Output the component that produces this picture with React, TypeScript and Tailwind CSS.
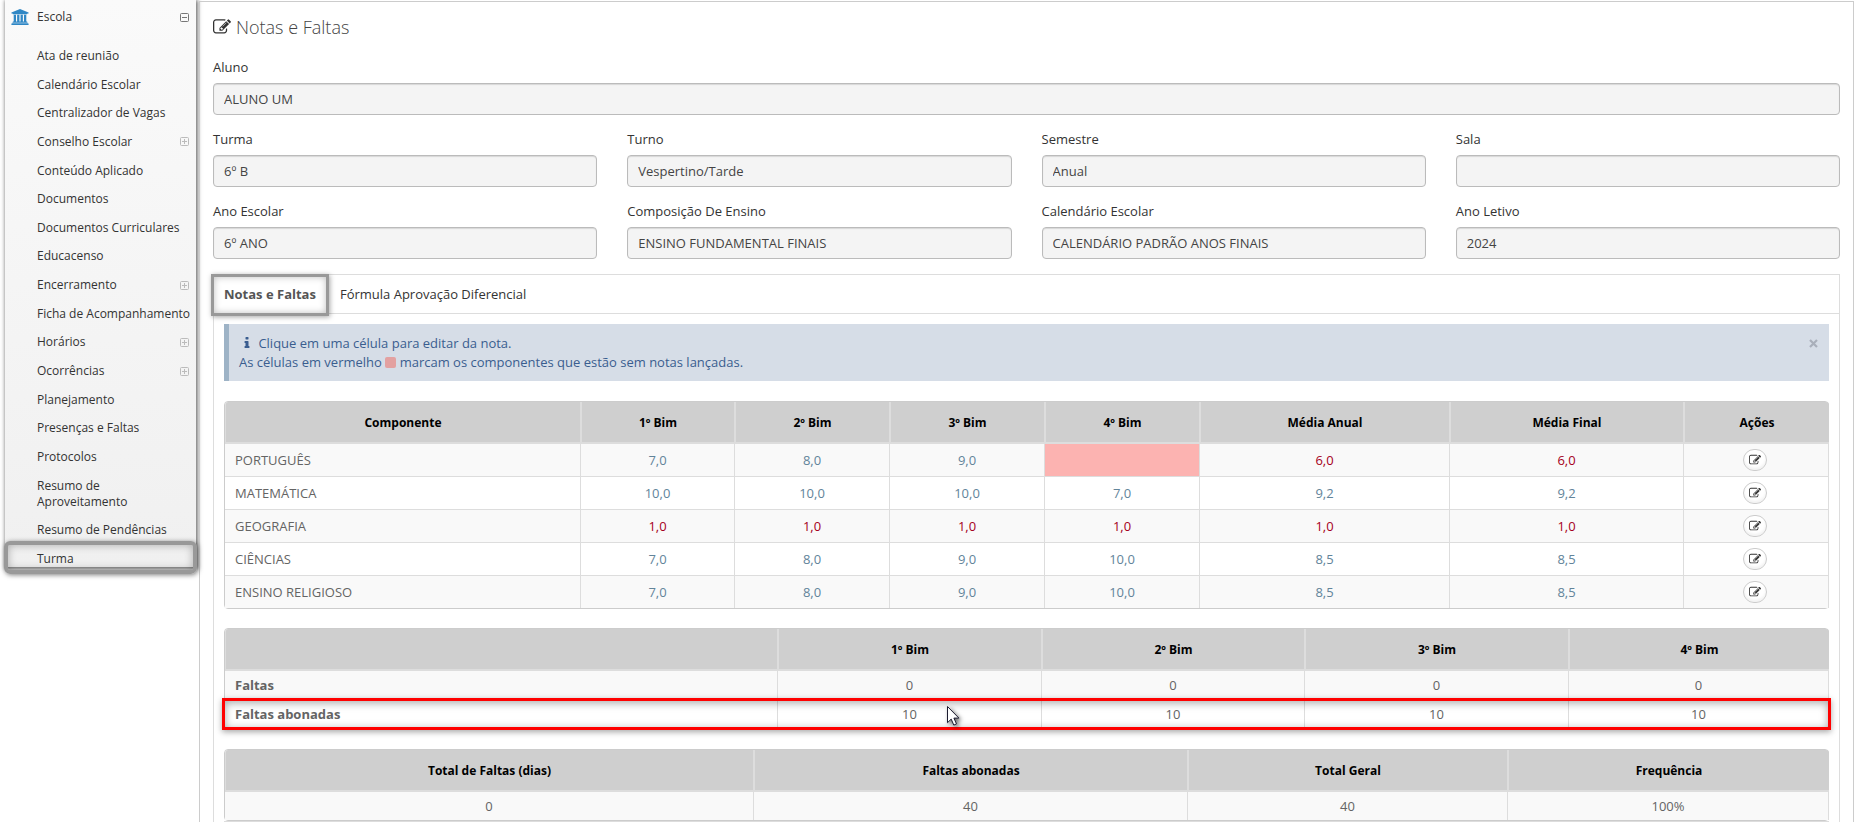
import React from 'react';

type MenuItem = { label: string; expandable?: boolean; active?: boolean };

const menuItems: MenuItem[] = [
  { label: 'Ata de reunião' },
  { label: 'Calendário Escolar' },
  { label: 'Centralizador de Vagas' },
  { label: 'Conselho Escolar', expandable: true },
  { label: 'Conteúdo Aplicado' },
  { label: 'Documentos' },
  { label: 'Documentos Curriculares' },
  { label: 'Educacenso' },
  { label: 'Encerramento', expandable: true },
  { label: 'Ficha de Acompanhamento' },
  { label: 'Horários', expandable: true },
  { label: 'Ocorrências', expandable: true },
  { label: 'Planejamento' },
  { label: 'Presenças e Faltas' },
  { label: 'Protocolos' },
  { label: 'Resumo de Aproveitamento' },
  { label: 'Resumo de Pendências' },
  { label: 'Turma', active: true },
];

const fields = [
  { id: 'turma', label: 'Turma', value: '6º B' },
  { id: 'turno', label: 'Turno', value: 'Vespertino/Tarde' },
  { id: 'semestre', label: 'Semestre', value: 'Anual' },
  { id: 'sala', label: 'Sala', value: '' },
  { id: 'ano-escolar', label: 'Ano Escolar', value: '6º ANO' },
  { id: 'composicao', label: 'Composição De Ensino', value: 'ENSINO FUNDAMENTAL FINAIS' },
  { id: 'calendario', label: 'Calendário Escolar', value: 'CALENDÁRIO PADRÃO ANOS FINAIS' },
  { id: 'ano-letivo', label: 'Ano Letivo', value: '2024' },
];

const grades = [
  { name: 'PORTUGUÊS', values: ['7,0', '8,0', '9,0', '', '6,0', '6,0'] },
  { name: 'MATEMÁTICA', values: ['10,0', '10,0', '10,0', '7,0', '9,2', '9,2'] },
  { name: 'GEOGRAFIA', values: ['1,0', '1,0', '1,0', '1,0', '1,0', '1,0'] },
  { name: 'CIÊNCIAS', values: ['7,0', '8,0', '9,0', '10,0', '8,5', '8,5'] },
  { name: 'ENSINO RELIGIOSO', values: ['7,0', '8,0', '9,0', '10,0', '8,5', '8,5'] },
];

const PASSING_GRADE = 7;

function gradeClass(value: string) {
  if (!value) return 'bg-[#fcb3b1]';
  return parseFloat(value.replace(',', '.')) < PASSING_GRADE ? 'text-[#a50021]' : 'text-[#62849a]';
}

function EditIcon({ className }: { className: string }) {
  return (
    <svg viewBox="0 0 1792 1792" fill="currentColor" className={className} aria-hidden="true">
      <path d="M888 1184l116-116-152-152-116 116v56h96v96h56zm440-720q-16-16-33 1l-350 350q-17 17-1 33t33-1l350-350q17-17 1-33zm80 594v190q0 119-84.5 203.5t-203.5 84.5h-832q-119 0-203.5-84.5t-84.5-203.5v-832q0-119 84.5-203.5t203.5-84.5h832q63 0 117 25 15 7 18 23 3 17-9 29l-49 49q-14 14-32 8-23-6-45-6h-832q-66 0-113 47t-47 113v832q0 66 47 113t113 47h832q66 0 113-47t47-113v-126q0-13 9-22l64-64q15-15 35-7t20 29zm-96-738l288 288-672 672h-288v-288zm444 132l-92 92-288-288 92-92q28-28 68-28t68 28l152 152q28 28 28 68t-28 68z" />
    </svg>
  );
}

function UniversityIcon() {
  return (
    <svg viewBox="0 0 1920 1792" fill="currentColor" className="h-4 w-[18px] text-[#2f87c5]" aria-hidden="true">
      <path d="M960 0l960 384v128h-128q0 26-20.5 45t-48.5 19h-1526q-28 0-48.5-19t-20.5-45h-128v-128zm-704 640h256v768h128v-768h256v768h128v-768h256v768h128v-768h256v768h59q28 0 48.5 19t20.5 45v64h-1664v-64q0-26 20.5-45t48.5-19h59v-768zm1595 960q28 0 48.5 19t20.5 45v128h-1920v-128q0-26 20.5-45t48.5-19h1782z" />
    </svg>
  );
}

function InfoIcon() {
  return (
    <svg viewBox="0 0 1792 1792" fill="currentColor" className="mx-px inline-block size-[14px] align-[-2px]" aria-hidden="true">
      <path d="M1216 1344v128q0 26-19 45t-45 19h-512q-26 0-45-19t-19-45v-128q0-26 19-45t45-19h64v-384h-64q-26 0-45-19t-19-45v-128q0-26 19-45t45-19h384q26 0 45 19t19 45v576h64q26 0 45 19t19 45zm-128-1152v192q0 26-19 45t-45 19h-256q-26 0-45-19t-19-45v-192q0-26 19-45t45-19h256q26 0 45 19t19 45z" />
    </svg>
  );
}

function ToggleIcon({ open, className }: { open?: boolean; className: string }) {
  return (
    <svg viewBox="0 0 9 9" fill="none" stroke="currentColor" className={className} aria-hidden="true">
      <rect x="0.5" y="0.5" width="8" height="8" rx="1" />
      <path d={open ? 'M2 4.5h5' : 'M2 4.5h5M4.5 2v5'} />
    </svg>
  );
}

function Field({ id, label, value }: { id: string; label: string; value: string }) {
  return (
    <div>
      <label htmlFor={id} className="block leading-5 text-[#333]">
        {label}
      </label>
      <input
        id={id}
        type="text"
        readOnly
        value={value}
        className="mt-1.5 block h-8 w-full rounded-[4px] border border-[#bbb] bg-[#f4f4f4] px-2.5 text-[#444] shadow-[inset_0_1px_1px_rgba(0,0,0,0.12)] outline-none"
      />
    </div>
  );
}

function DataTable({ columns, widths, children }: { columns: string[]; widths: string[]; children: React.ReactNode }) {
  return (
    <div className="rounded-[4px] border border-[#ccc]">
      <table className="w-full table-fixed border-separate border-spacing-0">
        <thead>
          <tr>
            {columns.map((column, i) => (
              <th
                key={i}
                scope="col"
                className={`h-[42px] border-b-2 border-l border-[#ddd] bg-[#cfcfcf] px-0 pt-0.5 pb-0 text-xs font-bold text-black first:rounded-tl-[3px] last:rounded-tr-[3px] not-last:border-r ${widths[i]}`}
              >
                {column}
              </th>
            ))}
          </tr>
        </thead>
        <tbody>{children}</tbody>
      </table>
    </div>
  );
}

function Sidebar() {
  return (
    <aside className="w-[191px] bg-linear-to-b from-[#fafafa] to-[#f0f0f0] text-xs text-[#333] shadow-[1px_1px_4px_1px_rgba(0,0,0,0.55)]">
      <a href="#escola" className="flex h-[34px] items-center px-[6px]">
        <UniversityIcon />
        <span className="ml-2 flex-1 leading-4">Escola</span>
        <ToggleIcon open className="mr-px size-[9px] text-[#777]" />
      </a>
      <ul className="mt-[14px] mb-1 flex h-[519px] flex-col justify-between">
        {menuItems.map((item) => (
          <li key={item.label} className="relative">
            <a href="#menu" className="flex items-center pr-[7px] pl-8 leading-4">
              <span className={item.label.endsWith('Aproveitamento') ? 'w-28' : 'flex-1 whitespace-nowrap'}>{item.label}</span>
              {item.expandable && <ToggleIcon className="size-[9px] text-[#bbb]" />}
            </a>
            {item.active && (
              <span className="pointer-events-none absolute -inset-x-px -top-2.5 -bottom-[7px] rounded-md border-4 border-[#999] shadow-[1px_1px_5px_rgba(0,0,0,0.5),inset_0_0_8px_rgba(0,0,0,0.3)]" />
            )}
          </li>
        ))}
      </ul>
    </aside>
  );
}

function GradesTable() {
  return (
    <DataTable
      columns={['Componente', '1º Bim', '2º Bim', '3º Bim', '4º Bim', 'Média Anual', 'Média Final', 'Ações']}
      widths={['w-[356px]', 'w-[154px]', 'w-[155px]', 'w-[155px]', 'w-[155px]', 'w-[250px]', 'w-[234px]', 'w-[145px]']}
    >
      {grades.map((row, r) => {
        const line = r < grades.length - 1 ? 'h-[33px] border-b' : 'h-8';
        return (
          <tr key={row.name} className="odd:bg-[#f9f9f9]">
            <td className={`border-r border-[#ddd] px-2.5 pt-0.5 pb-0 ${line}`}>{row.name}</td>
            {row.values.map((value, i) => (
              <td key={i} className={`border-r border-[#ddd] px-0 pt-0.5 pb-0 text-center ${line} ${gradeClass(value)}`}>
                {value}
              </td>
            ))}
            <td className={`border-r border-[#ddd] py-0 pr-0.5 pl-0 ${line}`}>
              <button
                type="button"
                aria-label={`Editar ${row.name}`}
                className="mx-auto flex h-[22px] w-6 items-center justify-center rounded-full border border-[#ccc] bg-white text-[#333] shadow-[inset_0_-2px_3px_rgba(0,0,0,0.06)]"
              >
                <EditIcon className="size-3" />
              </button>
            </td>
          </tr>
        );
      })}
    </DataTable>
  );
}

function AbsencesTable() {
  return (
    <DataTable
      columns={['', '1º Bim', '2º Bim', '3º Bim', '4º Bim']}
      widths={['w-[553px]', 'w-[264px]', 'w-[263px]', 'w-[264px]', 'w-[260px]']}
    >
      <tr className="bg-[#f9f9f9]">
        <th scope="row" className="h-[29px] border-r border-b border-[#ddd] px-2.5 pt-0.5 pb-0 text-left font-bold">
          Faltas
        </th>
        {[0, 0, 0, 0].map((value, i) => (
          <td key={i} className="h-[29px] border-r border-b border-[#ddd] px-0 pt-0.5 pb-0 text-center">
            {value}
          </td>
        ))}
      </tr>
      <tr className="relative">
        <th scope="row" className="h-[29px] border-r border-[#ddd] px-2.5 py-0 text-left font-bold">
          Faltas abonadas
          <span className="pointer-events-none absolute -top-0.5 -right-0.5 -bottom-px -left-[3px] z-10 border-3 border-[#f00] shadow-[0_2px_6px_rgba(0,0,0,0.35),inset_0_2px_8px_rgba(0,0,0,0.35)]" />
        </th>
        {[10, 10, 10, 10].map((value, i) => (
          <td key={i} className="relative h-[29px] border-r border-[#ddd] p-0 text-center">
            {value}
            {i === 0 && <Cursor />}
          </td>
        ))}
      </tr>
    </DataTable>
  );
}

function Cursor() {
  return (
    <svg
      viewBox="0 0 13 21"
      className="pointer-events-none absolute top-1.5 left-[169px] z-20 h-[21px] w-[13px] overflow-visible drop-shadow-[2px_2px_2px_rgba(0,0,0,0.6)]"
      aria-hidden="true"
    >
      <path d="M0.5 0.5v16.2l3.7-3.6 2.6 6 2.7-1.2-2.6-5.8h5z" fill="#fff" stroke="#1c1c30" />
    </svg>
  );
}

function TotalsTable() {
  return (
    <DataTable
      columns={['Total de Faltas (dias)', 'Faltas abonadas', 'Total Geral', 'Frequência']}
      widths={['w-[529px]', 'w-[434px]', 'w-[320px]', 'w-[321px]']}
    >
      <tr className="bg-[#f9f9f9]">
        {['0', '40', '40', '100%'].map((value, i) => (
          <td key={i} className="h-7 border-r border-[#ddd] px-0 pt-0.5 pb-0 text-center">
            {value}
          </td>
        ))}
      </tr>
    </DataTable>
  );
}

export default function App() {
  return (
    <div className="flex min-h-screen items-stretch bg-white pr-px pl-[5px] font-['Open_Sans',sans-serif] text-[13px] text-[#646464]">
      <div className="shrink-0">
        <Sidebar />
      </div>

      <main className="mt-px ml-[3px] min-w-0 flex-1 border-x border-t border-[#ccc] px-[13px]">
        <h1 className="flex h-[49px] items-center text-lg font-light text-[#444]">
          <EditIcon className="mr-[5px] size-[18px] text-[#333]" />
          Notas e Faltas
        </h1>

        <form className="mt-1.5 grid grid-cols-4 gap-x-[30px] gap-y-[14px]">
          <div className="col-span-4">
            <Field id="aluno" label="Aluno" value="ALUNO UM" />
          </div>
          {fields.map((field) => (
            <Field key={field.id} {...field} />
          ))}
        </form>

        <section className="mt-[15px] border-x border-t border-[#ddd]">
          <div role="tablist" className="flex h-[39px] border-b border-[#ddd]">
            <button type="button" role="tab" aria-selected="true" className="relative px-2.5 pt-0.5 font-bold text-[#555]">
              Notas e Faltas
              <span className="pointer-events-none absolute -top-px -right-[3px] -bottom-[3px] -left-[3px] border-3 border-[#999] shadow-[1px_1px_5px_rgba(0,0,0,0.35),inset_0_0_7px_rgba(0,0,0,0.25)]" />
            </button>
            <button type="button" role="tab" aria-selected="false" className="px-[14px] pt-0.5 text-[#333]">
              Fórmula Aprovação Diferencial
            </button>
          </div>

          <div className="px-2.5 pt-2.5">
            <div className="mb-5 flex items-start border-l-5 border-[#9eb3c6] bg-[#d6dde7] pt-2.5 pr-[11px] pb-[9px] pl-2.5 text-[#3a5d8f]">
              <p className="flex-1 leading-[19px]">
                <InfoIcon /> Clique em uma célula para editar da nota.
                <br />
                As células em vermelho <span className="inline-block size-[11px] rounded-[2px] bg-[#e3a1a1] align-[-1px]" /> marcam os
                componentes que estão sem notas lançadas.
              </p>
              <button type="button" aria-label="Fechar" className="flex h-[19px] items-center text-[#a9afba]">
                <svg viewBox="0 0 9 9" className="size-[9px]" fill="none" stroke="currentColor" strokeWidth="2.2">
                  <path d="M1 1l7 7M8 1l-7 7" />
                </svg>
              </button>
            </div>

            <div className="flex flex-col gap-[19px] border-b border-[#ddd]">
              <GradesTable />
              <AbsencesTable />
              <TotalsTable />
            </div>
          </div>
        </section>
      </main>
    </div>
  );
}
